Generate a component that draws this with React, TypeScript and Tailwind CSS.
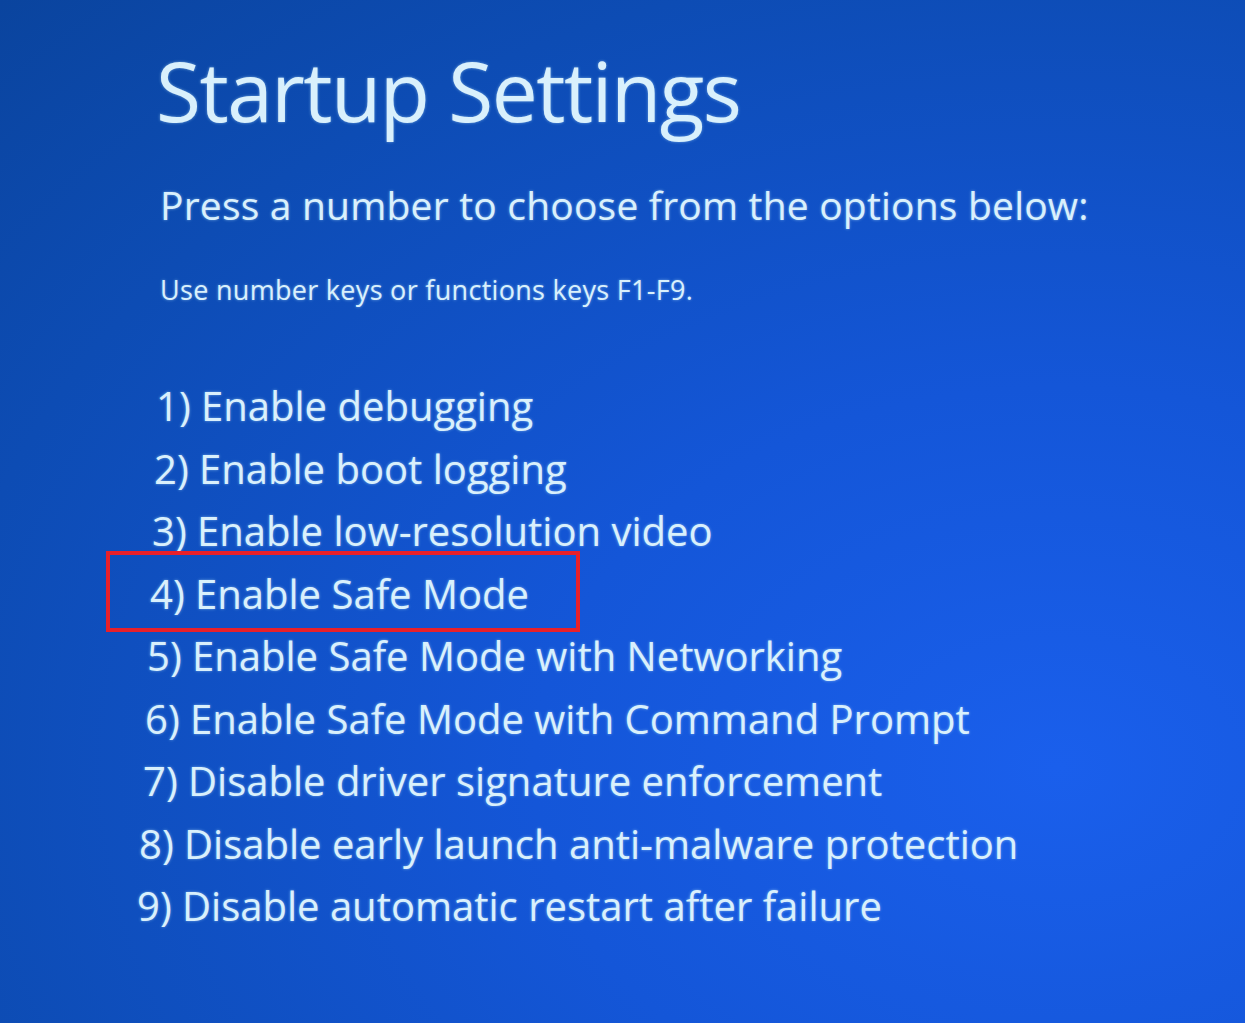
import React from 'react';

const options = [
  { n: '1', label: 'Enable debugging', indent: 'pl-[156px]' },
  { n: '2', label: 'Enable boot logging', indent: 'pl-[154px]' },
  { n: '3', label: 'Enable low-resolution video', indent: 'pl-[152px]' },
  { n: '4', label: 'Enable Safe Mode', indent: 'pl-[150px]', selected: true },
  { n: '5', label: 'Enable Safe Mode with Networking', indent: 'pl-[147px]' },
  { n: '6', label: 'Enable Safe Mode with Command Prompt', indent: 'pl-[145px]' },
  { n: '7', label: 'Disable driver signature enforcement', indent: 'pl-[143px]' },
  { n: '8', label: 'Disable early launch anti-malware protection', indent: 'pl-[139px]' },
  { n: '9', label: 'Disable automatic restart after failure', indent: 'pl-[137px]' },
];

export default function App() {
  return (
    <div
      className="w-[1245px] h-[1023px] overflow-hidden bg-[radial-gradient(ellipse_at_85%_75%,#1a5fec_0%,#1456d8_35%,#0d4cb4_75%,#0a449e_100%)] text-[#d9f0fc] [text-shadow:0_0_3px_rgba(190,235,255,0.55)]"
      style={{ fontFamily: '"Open Sans", "Noto Sans", sans-serif' }}
    >
      <div className="pt-[40px]">
        <h1 className="pl-[156px] text-[82px] leading-[100px] font-normal tracking-[-1.5px]">Startup Settings</h1>
        <p className="pl-[160px] mt-[41px] text-[39px] leading-[48px] tracking-[0.2px]">
          Press a number to choose from the options below:
        </p>
        <p className="pl-[160px] mt-[44px] text-[27px] leading-[34px] tracking-[0.3px]">
          Use number keys or functions keys F1-F9.
        </p>

        <ul className="mt-[68px] flex flex-col">
          {options.map((o) => (
            <li key={o.n} className={`relative ${o.indent} text-[40px] leading-[62.5px] h-[62.5px]`}>
              {o.n}) {o.label}
              {o.selected && (
                <span className="absolute left-[106px] -top-[12px] h-[81px] w-[474px] border-[4px] border-[#e8202a]" />
              )}
            </li>
          ))}
        </ul>
      </div>
    </div>
  );
}
